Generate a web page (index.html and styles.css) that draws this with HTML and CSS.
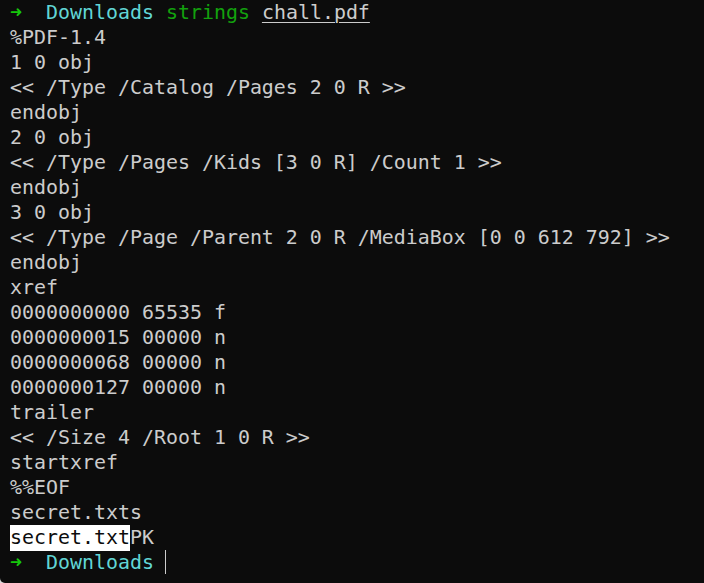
FILE: index.html
```html
<!DOCTYPE html>
<html>
<head>
<meta charset="utf-8">
<link rel="stylesheet" href="styles.css">
</head>
<body>
<div class="term">
<div class="line"><span class="arrow">➜</span>  <span class="cwd">Downloads</span> <span class="cmd">strings</span> <span class="arg">chall.pdf</span></div>
<div class="line">%PDF-1.4</div>
<div class="line">1 0 obj</div>
<div class="line">&lt;&lt; /Type /Catalog /Pages 2 0 R &gt;&gt;</div>
<div class="line">endobj</div>
<div class="line">2 0 obj</div>
<div class="line">&lt;&lt; /Type /Pages /Kids [3 0 R] /Count 1 &gt;&gt;</div>
<div class="line">endobj</div>
<div class="line">3 0 obj</div>
<div class="line">&lt;&lt; /Type /Page /Parent 2 0 R /MediaBox [0 0 612 792] &gt;&gt;</div>
<div class="line">endobj</div>
<div class="line">xref</div>
<div class="line">0000000000 65535 f</div>
<div class="line">0000000015 00000 n</div>
<div class="line">0000000068 00000 n</div>
<div class="line">0000000127 00000 n</div>
<div class="line">trailer</div>
<div class="line">&lt;&lt; /Size 4 /Root 1 0 R &gt;&gt;</div>
<div class="line">startxref</div>
<div class="line">%%EOF</div>
<div class="line">secret.txts</div>
<div class="line"><span class="sel">secret.txt</span>PK</div>
<div class="line"><span class="arrow">➜</span>  <span class="cwd">Downloads</span> <span class="cursor"></span></div>
</div>
</body>
</html>
```
FILE: styles.css
```css
html, body {
  margin: 0;
  padding: 0;
  background: #d9d9d9;
}
.term {
  width: 704px;
  height: 583px;
  box-sizing: border-box;
  background: #0c0c0c;
  color: #cccccc;
  font-family: "DejaVu Sans Mono", monospace;
  font-size: 19.93px;
  padding: 0 0 0 10px;
  border-bottom-left-radius: 5px;
  overflow: hidden;
}
.line {
  height: 25px;
  line-height: 25px;
  white-space: pre;
}
.arrow {
  color: #16c60c;
}
.cwd {
  color: #61d6d6;
}
.cmd {
  color: #13a10e;
}
.arg {
  text-decoration: underline;
  text-underline-offset: 3px;
  text-decoration-thickness: 1px;
}
.sel {
  background: #ffffff;
  color: #0c0c0c;
  display: inline-block;
  height: 26px;
}
.cursor {
  display: inline-block;
  width: 1px;
  height: 24px;
  background: #cccccc;
  vertical-align: top;
  margin-left: -1px;
}
```
